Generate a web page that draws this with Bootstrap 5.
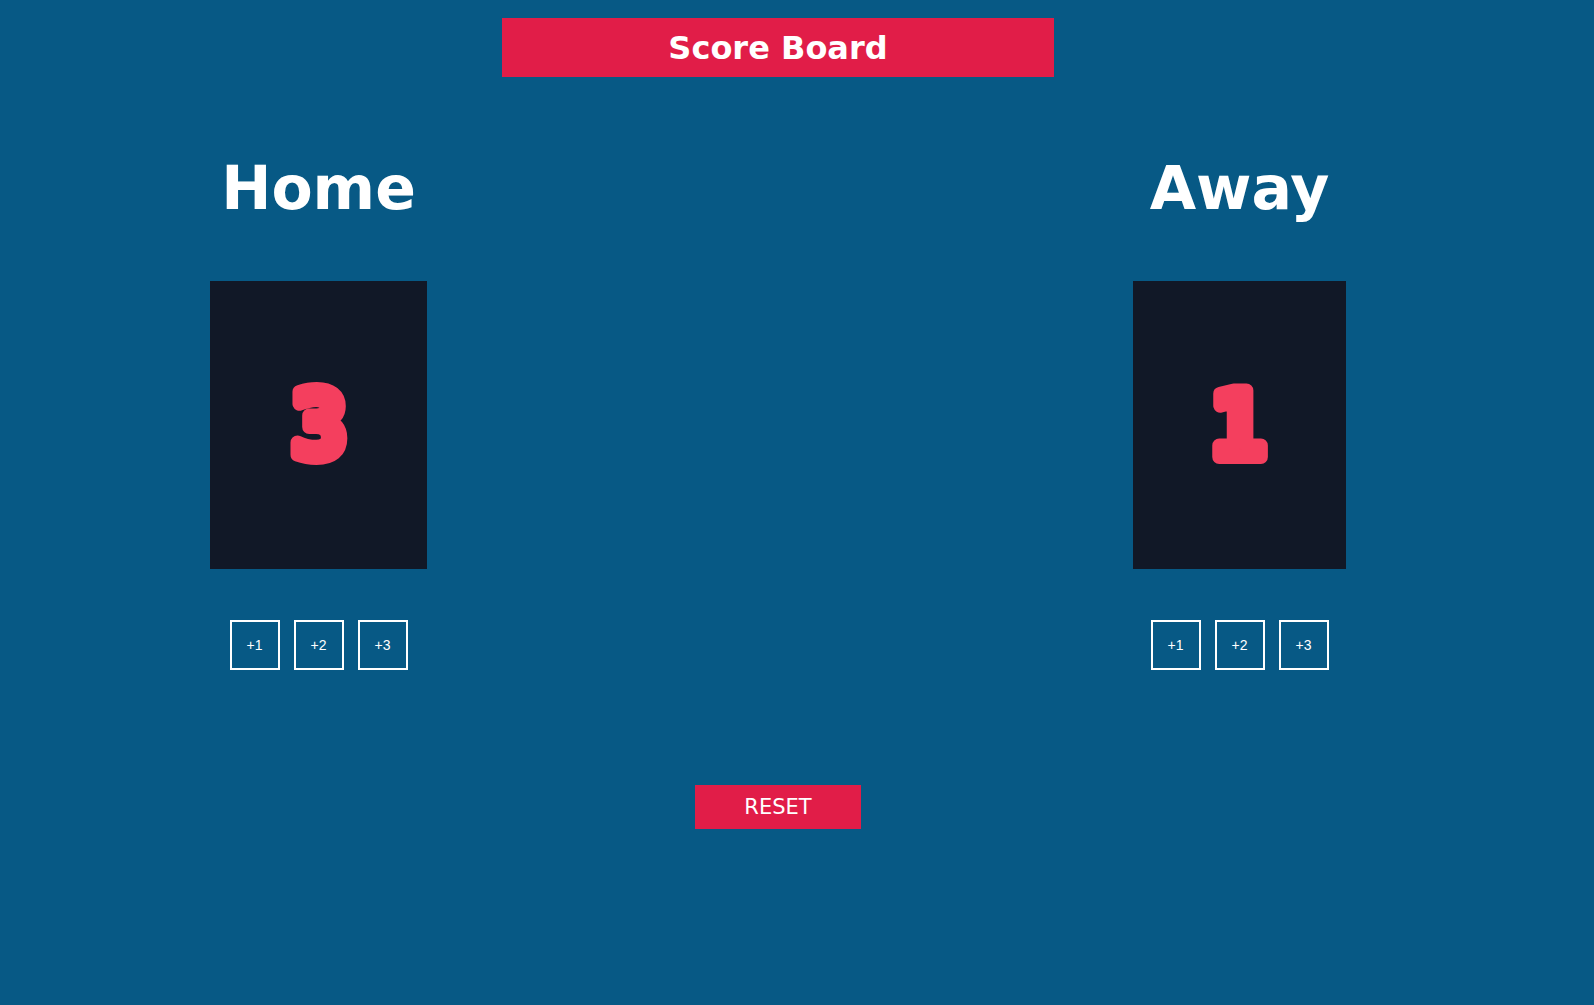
<!DOCTYPE html>
<html lang="en">
<head>
<meta charset="utf-8">
<meta name="viewport" content="width=device-width, initial-scale=1">
<title>Score Board</title>
<link href="https://cdn.jsdelivr.net/npm/bootstrap@5.3.0/dist/css/bootstrap.min.css" rel="stylesheet">
<style>
  body { background: #075985; color: #fff; font-family: Verdana, "DejaVu Sans", sans-serif; }
  .board { padding: 18px 38px 24px 0; }
  .board-title { width: 552px; max-width: 100%; padding: 12px 11px 10px; background: #e11d48; font-size: 32px; line-height: 37px; font-weight: 700; }
  .teams { padding: 76px 210px 0; }
  .team-name { font-size: 60px; line-height: 70px; font-weight: 700; margin-bottom: 58px; }
  .score-panel { width: 217px; height: 288px; background: #111827; }
  .score-panel-away { width: 213px; }
  .score-value { fill: #f43f5e; stroke: #f43f5e; stroke-width: 14px; stroke-linejoin: round; text-anchor: middle; font-family: "DejaVu Sans Mono", monospace; font-weight: 700; font-size: 90px; }
  .points { gap: 14px; margin-top: 51px; }
  .point-btn { width: 50px; height: 50px; border: 2px solid #fff; border-radius: 0; color: #fff; font-family: "Liberation Sans", Arial, sans-serif; font-size: 14px; line-height: 18px; }
  .reset-btn { width: 166px; height: 44px; margin-top: 115px; border-radius: 0; border: 0; background: #e11d48; color: #fff; font-size: 21px; line-height: 24px; }
  .point-btn:hover, .reset-btn:hover { background: #f43f5e; color: #fff; border-color: #fff; }
</style>
<script src="https://cdn.jsdelivr.net/npm/bootstrap@5.3.0/dist/js/bootstrap.bundle.min.js" defer></script>
</head>
<body>
<main class="board d-flex flex-column align-items-center">
  <h1 class="board-title text-center mb-0">Score Board</h1>
  <div class="teams w-100 d-flex justify-content-between">
    <section class="d-flex flex-column align-items-center">
      <h2 class="team-name">Home</h2>
      <div class="score-panel d-flex align-items-center justify-content-center"><svg width="140" height="160" viewBox="0 0 140 160"><text class="score-value" x="70" y="112">3</text></svg></div>
      <div class="points d-flex">
        <button type="button" class="point-btn btn p-0">+1</button>
        <button type="button" class="point-btn btn p-0">+2</button>
        <button type="button" class="point-btn btn p-0">+3</button>
      </div>
    </section>
    <section class="d-flex flex-column align-items-center">
      <h2 class="team-name">Away</h2>
      <div class="score-panel score-panel-away d-flex align-items-center justify-content-center"><svg width="140" height="160" viewBox="0 0 140 160"><text class="score-value" x="68" y="112">1</text></svg></div>
      <div class="points d-flex">
        <button type="button" class="point-btn btn p-0">+1</button>
        <button type="button" class="point-btn btn p-0">+2</button>
        <button type="button" class="point-btn btn p-0">+3</button>
      </div>
    </section>
  </div>
  <button type="button" class="reset-btn btn p-0">RESET</button>
</main>
</body>
</html>
